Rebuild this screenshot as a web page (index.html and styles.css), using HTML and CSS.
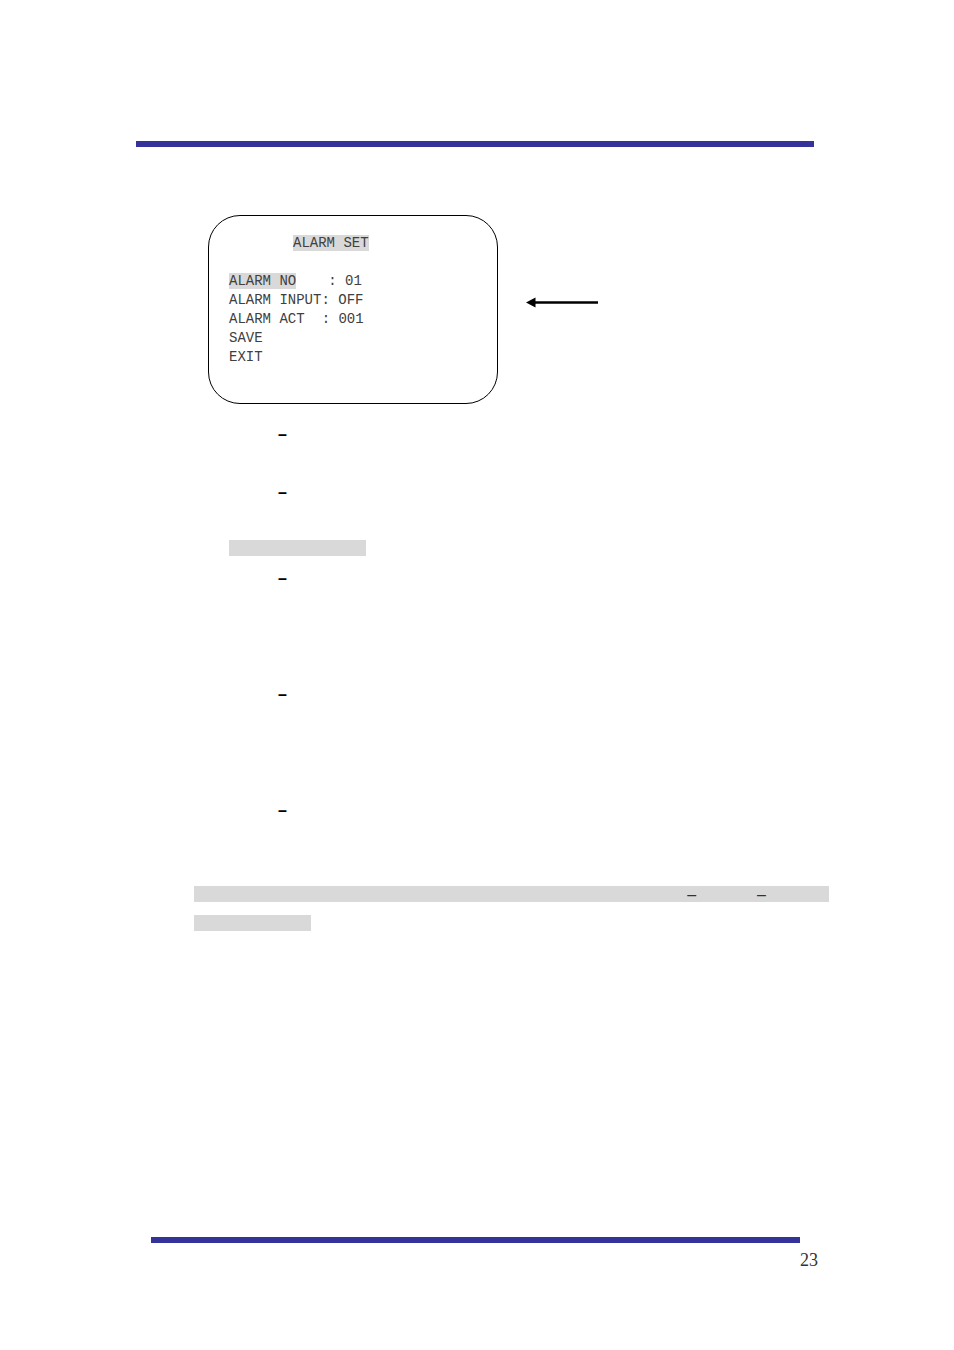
FILE: index.html
```
<!DOCTYPE html>
<html lang="en">
<head>
    <meta charset="UTF-8">
    <meta name="viewport" content="width=device-width, initial-scale=1.0">
    <title>Alarm Set</title>
    <link rel="stylesheet" href="styles.css">
</head>
<body>
    <header class="top-rule"></header>

    <main>
        <!-- OSD menu -->
        <section class="figure">
            <div class="screen">
                <h1><mark>ALARM SET</mark></h1>
                <ul class="menu">
                    <li class="gap-large"><mark>ALARM NO</mark><span>: 01</span></li>
                    <li><span>ALARM INPUT</span><span>: OFF</span></li>
                    <li class="gap-small"><span>ALARM ACT</span><span>: 001</span></li>
                    <li>SAVE</li>
                    <li>EXIT</li>
                </ul>
            </div>
            <svg class="arrow" width="73" height="11" viewBox="0 0 73 11" aria-hidden="true">
                <path d="M9 5.5H72" stroke="#000" stroke-width="2.6"/>
                <path d="M0 5.5L9.5 0.5V10.5Z" fill="#000"/>
            </svg>
        </section>

        <ul class="items">
            <li>–</li>
            <li>–</li>
        </ul>

        <div class="subtitle"></div>

        <ul class="items items-long">
            <li>–</li>
            <li>–</li>
            <li>–</li>
        </ul>

        <div class="note">
            <div class="note-line"><span>–</span><span>–</span></div>
            <div class="note-line note-short"></div>
        </div>
    </main>

    <footer>
        <div class="bottom-rule"></div>
        <p class="page-number">23</p>
    </footer>
</body>
</html>
```

FILE: styles.css
```
* {
    box-sizing: border-box;
}

body {
    display: flex;
    flex-direction: column;
    min-height: 100vh;
    margin: 0;
    padding: 141px 0 78px;
    background-color: #fff;
    color: #000;
    font-family: "Liberation Sans", Arial, sans-serif;
    font-size: 16px;
}

.top-rule {
    height: 6px;
    margin: 0 140px 0 136px;
    background-color: #333399;
}

main {
    padding-top: 68px;
}

mark {
    background-color: #d9d9d9;
    color: inherit;
}

/* menu screen */
.figure {
    display: flex;
    align-items: flex-start;
    gap: 28px;
    margin-left: 208px;
}

.screen {
    width: 290px;
    padding: 18px 20px 36px;
    border: 1px solid #000;
    border-radius: 32px;
    color: #404040;
    font-family: "Liberation Mono", "Courier New", monospace;
    font-size: 14px;
    line-height: 19px;
}

.screen h1 {
    margin: 0 0 19px;
    padding-left: 64px;
    font-size: 14px;
    font-weight: normal;
}

.menu {
    margin: 0;
    padding: 0;
    list-style: none;
}

.menu li {
    display: flex;
}

.menu .gap-large {
    gap: 32px;
}

.menu .gap-small {
    gap: 17px;
}

.menu mark {
    height: 16px;
    margin-top: 1px;
    line-height: 17px;
}

.arrow {
    margin-top: 82px;
}

/* text items */
.items {
    margin: 16px 0 0 278px;
    padding: 0;
    list-style: none;
    font-weight: bold;
    line-height: 29px;
}

.items li {
    height: 58px;
}

.subtitle {
    width: 137px;
    height: 16px;
    margin: 4px 0 8px 229px;
    background-color: #d9d9d9;
}

.items-long {
    margin-top: 0;
}

.items-long li {
    height: 116px;
}

.items-long li:last-child {
    height: 90px;
}

.note {
    margin: 0 125px 0 194px;
}

.note-line {
    display: flex;
    justify-content: flex-end;
    gap: 61px;
    height: 16px;
    margin-bottom: 13px;
    padding-right: 63px;
    background-color: #d9d9d9;
    color: #333;
    line-height: 18px;
}

.note-short {
    width: 117px;
}

footer {
    margin-top: auto;
}

.bottom-rule {
    height: 6px;
    margin: 0 154px 0 151px;
    background-color: #333399;
}

.page-number {
    margin: 6px 136px 0 0;
    padding-bottom: 1px;
    color: #333;
    font-family: "Liberation Serif", "Times New Roman", serif;
    font-size: 18px;
    line-height: 22px;
    text-align: right;
}
```
